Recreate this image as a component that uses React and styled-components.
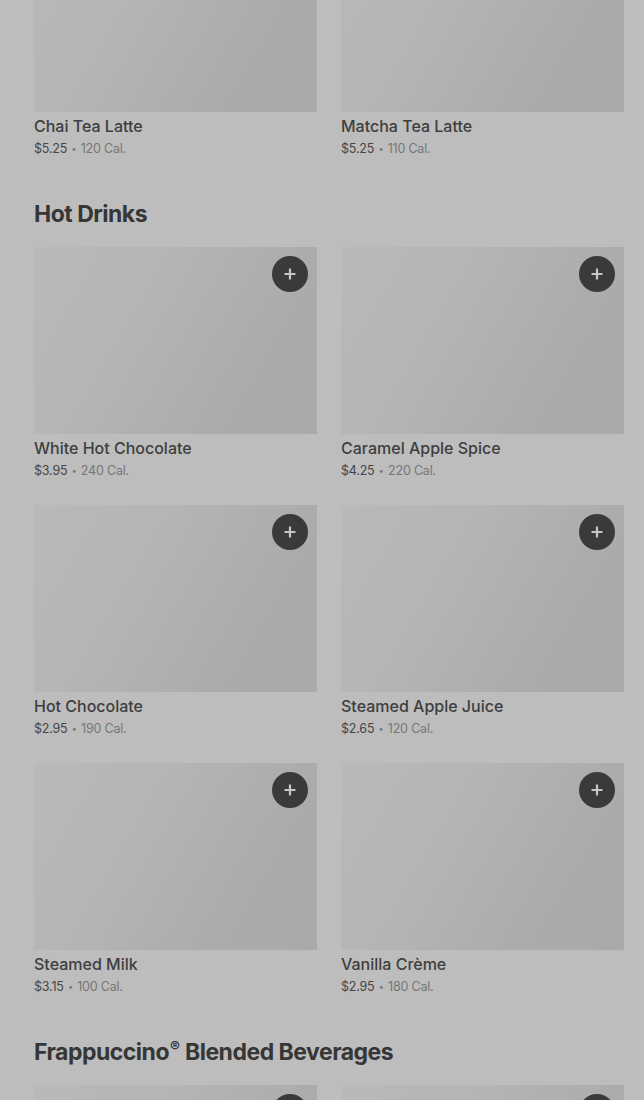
import React from "react";
import styled, { createGlobalStyle } from "styled-components";

const Global = createGlobalStyle`
  html, body { margin: 0; padding: 0; background: #bdbdbd; }
  body { font-family: Inter, "Noto Sans", sans-serif; overflow: hidden; }
`;

const Page = styled.main`
  padding: 0 20px 0 34px;
  margin-top: -75px;
  display: flex;
  flex-direction: column;
  gap: 40px;
`;

const Section = styled.section`
  display: flex;
  flex-direction: column;
`;

const Heading = styled.h2`
  margin: 0 0 17px;
  font-size: 23px;
  line-height: 32px;
  font-weight: 700;
  letter-spacing: -0.5px;
  color: #363636;
  sup {
    font-size: 15px;
    vertical-align: top;
    line-height: 22px;
    letter-spacing: 0;
    margin: 0 5px 0 1px;
  }
`;

const Grid = styled.div`
  display: grid;
  grid-template-columns: 283px 283px;
  column-gap: 24px;
  row-gap: 25px;
`;

const Card = styled.article`
  display: flex;
  flex-direction: column;
`;

const Thumb = styled.div`
  position: relative;
  height: 187px;
  background: linear-gradient(120deg, #b9b9b9 0%, #b5b5b5 35%, #ababab 75%, #aaaaaa 100%);
`;

const AddButton = styled.button`
  position: absolute;
  top: 9px;
  right: 9px;
  width: 36px;
  height: 36px;
  border-radius: 50%;
  border: none;
  padding: 0;
  background: #3a3a3a;
  display: flex;
  align-items: center;
  justify-content: center;
  color: #c6c6c6;
`;

const Title = styled.div`
  margin-top: 4px;
  font-size: 16px;
  line-height: 20px;
  font-weight: 500;
  color: #3e3e3e;
`;

const Meta = styled.div`
  margin-top: 4px;
  font-size: 12.5px;
  line-height: 18px;
  letter-spacing: -0.2px;
  color: #454545;
  span { color: #767676; }
  i { font-style: normal; font-size: 9px; vertical-align: 1px; margin: 0 1px; color: #767676; }
`;

const Plus = () => (
  <svg width="14" height="14" viewBox="0 0 14 14" fill="none">
    <path d="M7 1.5v11M1.5 7h11" stroke="currentColor" strokeWidth="2.2" />
  </svg>
);

const Item = ({ name, price, cal, add = true }) => (
  <Card>
    <Thumb>{add && <AddButton aria-label="Add"><Plus /></AddButton>}</Thumb>
    <Title>{name}</Title>
    <Meta>
      {price} <i>•</i> <span>{cal} Cal.</span>
    </Meta>
  </Card>
);

const hot = [
  ["White Hot Chocolate", "$3.95", 240],
  ["Caramel Apple Spice", "$4.25", 220],
  ["Hot Chocolate", "$2.95", 190],
  ["Steamed Apple Juice", "$2.65", 120],
  ["Steamed Milk", "$3.15", 100],
  ["Vanilla Crème", "$2.95", 180],
];

export default function App() {
  return (
    <>
      <Global />
      <Page>
        <Section>
          <Grid>
            <Item name="Chai Tea Latte" price="$5.25" cal={120} add={false} />
            <Item name="Matcha Tea Latte" price="$5.25" cal={110} add={false} />
          </Grid>
        </Section>
        <Section>
          <Heading>Hot Drinks</Heading>
          <Grid>
            {hot.map(([n, p, c]) => (
              <Item key={n} name={n} price={p} cal={c} />
            ))}
          </Grid>
        </Section>
        <Section>
          <Heading>
            Frappuccino<sup>®</sup>Blended Beverages
          </Heading>
          <Grid>
            <Item name="Caramel Frappuccino® Blended Beverage" price="$5.45" cal={380} />
            <Item name="Mocha Frappuccino® Blended Beverage" price="$5.45" cal={370} />
          </Grid>
        </Section>
      </Page>
    </>
  );
}
